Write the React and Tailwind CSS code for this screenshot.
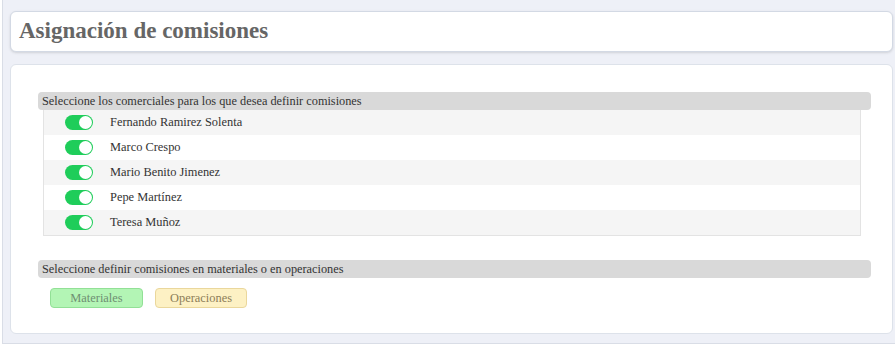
const comerciales = [
  "Fernando Ramirez Solenta",
  "Marco Crespo",
  "Mario Benito Jimenez",
  "Pepe Martínez",
  "Teresa Muñoz",
];

function Toggle() {
  return (
    <span className="relative inline-block w-[28px] h-[15px] rounded-full bg-[#1fcd5a]">
      <span className="absolute right-[1px] top-[1px] w-[13px] h-[13px] rounded-full bg-white" />
    </span>
  );
}

export default function App() {
  return (
    <div className="w-[895px] h-[348px] bg-white [font-family:Liberation_Serif,serif] overflow-hidden">
      <div className="ml-[2px] h-[344px] bg-[#eef0f7] border-l border-b border-[#d9dde6] pt-[11px] pl-[7px]">
        {/* Title */}
        <div className="w-[883px] h-[41px] bg-white border border-[#d3d9e4] rounded-md shadow-sm flex items-center pl-[8px]">
          <h1 className="text-[23px] font-bold text-[#666]">Asignación de comisiones</h1>
        </div>

        {/* Body */}
        <div className="mt-[12px] w-[883px] h-[270px] bg-white border border-[#dde2ea] rounded-md pt-[27px] pl-[27px]">
          <div className="w-[833px] h-[18px] bg-[#d9d9d9] rounded-sm flex items-center pl-[4px] text-[12.3px] text-[#333]">
            Seleccione los comerciales para los que desea definir comisiones
          </div>
          <div className="ml-[5px] w-[818px] border border-t-0 border-[#e3e3e3]">
            {comerciales.map((name, i) => (
              <div
                key={name}
                className={`h-[25px] flex items-center pl-[21px] ${i % 2 === 0 ? "bg-[#f5f5f5]" : "bg-white"}`}
              >
                <Toggle />
                <span className="ml-[17px] text-[12.4px] text-[#333]">{name}</span>
              </div>
            ))}
          </div>

          <div className="mt-[24px] w-[833px] h-[18px] bg-[#d9d9d9] rounded-sm flex items-center pl-[4px] text-[12.3px] text-[#333]">
            Seleccione definir comisiones en materiales o en operaciones
          </div>
          <div className="mt-[10px] ml-[12px] flex gap-[12px]">
            <button className="w-[93px] h-[20px] bg-[#b3f5b5] border border-[#92e096] rounded-sm text-[12.4px] text-[#6f8f72]">
              Materiales
            </button>
            <button className="w-[92px] h-[20px] bg-[#fdf1c4] border border-[#ead79c] rounded-sm text-[12.4px] text-[#8c7d58]">
              Operaciones
            </button>
          </div>
        </div>
      </div>
    </div>
  );
}
